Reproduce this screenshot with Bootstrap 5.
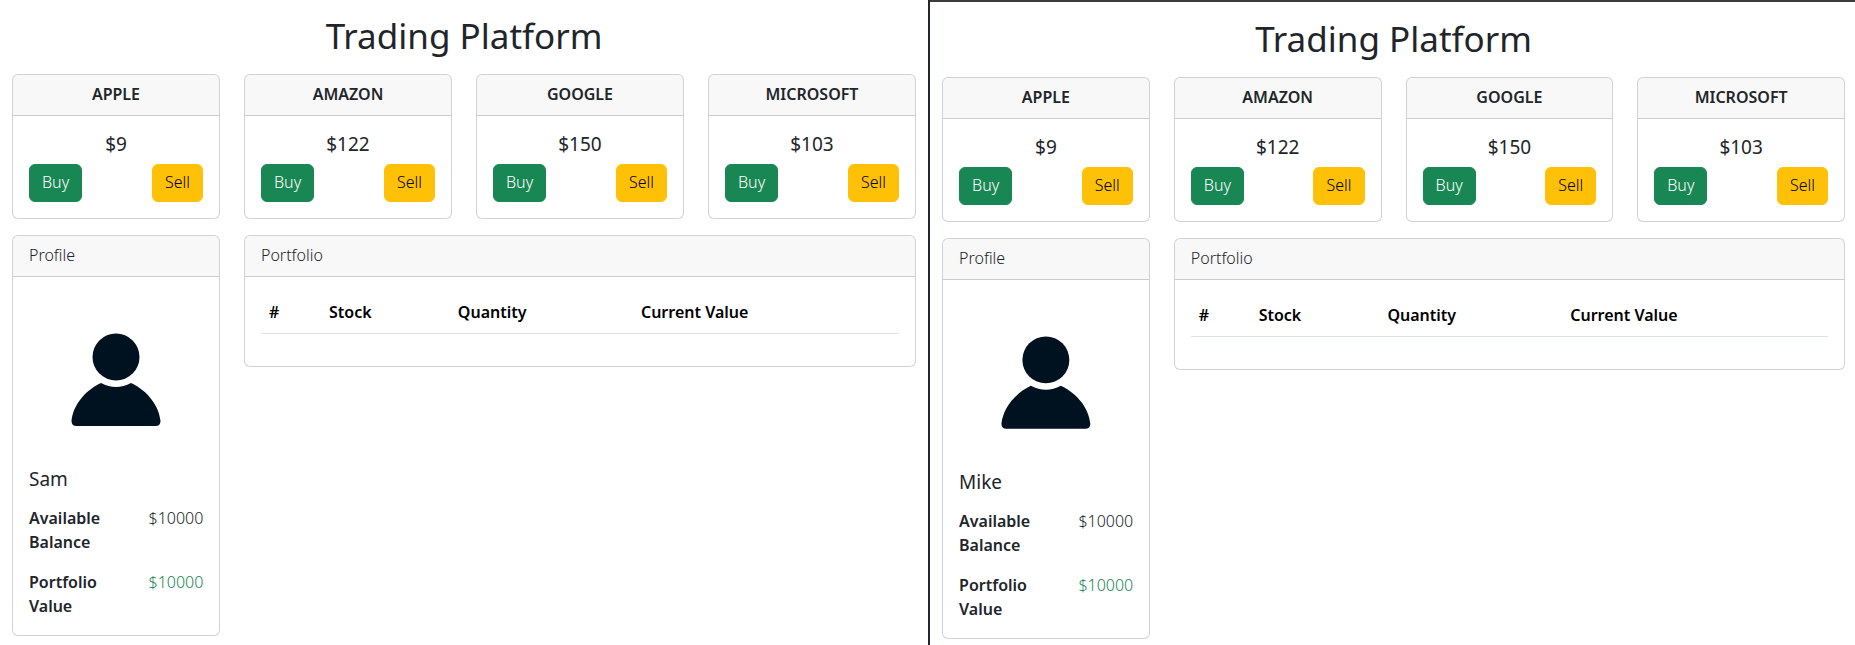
<!DOCTYPE html>
<html lang="en">
<head>
<meta charset="utf-8">
<meta name="viewport" content="width=device-width, initial-scale=1">
<title>Trading Platform</title>
<link href="https://cdn.jsdelivr.net/npm/bootstrap@5.3.0/dist/css/bootstrap.min.css" rel="stylesheet">
<style>
  body { font-family: "Noto Sans", "Open Sans", sans-serif; font-size: 16px; line-height: 24px; font-weight: 350; overflow-x: hidden; }
  .pane { flex: 1 1 0; min-width: 0; overflow: hidden; padding-top: 12px; }
  .pane-first { flex: 0 0 50.03%; }
  .pane-second { border-left: 2px solid #222529; padding-top: 0; }
  .pane-second::before { content: ""; display: block; height: 2px; margin-bottom: 13px; background: #3d3b3d; }
  .pane-second .container-fluid { padding-right: 10px; }
  h1 { font-size: 35px; line-height: 48px; margin-bottom: 14px; font-weight: 450; }
  h5 { font-size: 19px; line-height: 24px; font-weight: 450; }
  .card-header { padding: 7px 16px 9px; }
  .ticker, .balances dt, .holdings th { font-weight: 600; }
  .btn { font-size: 16px; line-height: 24px; font-weight: 350; padding: 5px 12px 7px; }
  .balances { padding: 7px 0 1px; }
  .balances dt, .balances dd { margin-bottom: 16px; }
  .balances .row:last-child > * { margin-bottom: 0; }
  .avatar { display: block; width: 100%; height: auto; }
  .holdings { table-layout: fixed; color: #000; }
  .holdings th { padding: 7px 8px 9px; }
</style>
</head>
<body>
<div class="d-flex min-vh-100">

  <section class="pane pane-first">
    <div class="container-fluid">
      <h1 class="text-center">Trading Platform</h1>
      <div class="row">
        <div class="col-3"><div class="card mb-3 text-center">
          <div class="card-header ticker">APPLE</div>
          <div class="card-body"><h5>$9</h5>
            <div class="d-flex justify-content-between"><button type="button" class="btn btn-success">Buy</button><button type="button" class="btn btn-warning">Sell</button></div></div>
        </div></div>
        <div class="col-3"><div class="card mb-3 text-center">
          <div class="card-header ticker">AMAZON</div>
          <div class="card-body"><h5>$122</h5>
            <div class="d-flex justify-content-between"><button type="button" class="btn btn-success">Buy</button><button type="button" class="btn btn-warning">Sell</button></div></div>
        </div></div>
        <div class="col-3"><div class="card mb-3 text-center">
          <div class="card-header ticker">GOOGLE</div>
          <div class="card-body"><h5>$150</h5>
            <div class="d-flex justify-content-between"><button type="button" class="btn btn-success">Buy</button><button type="button" class="btn btn-warning">Sell</button></div></div>
        </div></div>
        <div class="col-3"><div class="card mb-3 text-center">
          <div class="card-header ticker">MICROSOFT</div>
          <div class="card-body"><h5>$103</h5>
            <div class="d-flex justify-content-between"><button type="button" class="btn btn-success">Buy</button><button type="button" class="btn btn-warning">Sell</button></div></div>
        </div></div>
      </div>
      <div class="row align-items-start">
        <div class="col-3"><div class="card">
          <div class="card-header">Profile</div>
          <div class="card-body">
            <svg class="avatar" viewBox="0 0 174 174" fill="#00111f" role="img" aria-label="Profile picture">
              <circle cx="87" cy="64" r="23.5"/>
              <path d="M72 90Q87 98 102 90C119 98 130 113 131.500 128Q131.500 133 126.500 133H47.500Q42.500 133 42.500 128C44 113 55 98 72 90Z"/>
            </svg>
            <h5>Sam</h5>
            <dl class="balances mb-0">
              <div class="row"><dt class="col-7">Available Balance</dt><dd class="col-5 ps-3 pe-0">$10000</dd></div>
              <div class="row"><dt class="col-7">Portfolio Value</dt><dd class="col-5 ps-3 pe-0 text-success">$10000</dd></div>
            </dl>
          </div>
        </div></div>
        <div class="col-9"><div class="card">
          <div class="card-header">Portfolio</div>
          <div class="card-body">
            <table class="table holdings">
              <colgroup><col style="width:9.4%"><col style="width:20.2%"><col style="width:28.7%"><col></colgroup>
              <thead><tr><th scope="col">#</th><th scope="col">Stock</th><th scope="col">Quantity</th><th scope="col">Current Value</th></tr></thead>
              <tbody></tbody>
            </table>
          </div>
        </div></div>
      </div>
    </div>
  </section>

  <section class="pane pane-second">
    <div class="container-fluid">
      <h1 class="text-center">Trading Platform</h1>
      <div class="row">
        <div class="col-3"><div class="card mb-3 text-center">
          <div class="card-header ticker">APPLE</div>
          <div class="card-body"><h5>$9</h5>
            <div class="d-flex justify-content-between"><button type="button" class="btn btn-success">Buy</button><button type="button" class="btn btn-warning">Sell</button></div></div>
        </div></div>
        <div class="col-3"><div class="card mb-3 text-center">
          <div class="card-header ticker">AMAZON</div>
          <div class="card-body"><h5>$122</h5>
            <div class="d-flex justify-content-between"><button type="button" class="btn btn-success">Buy</button><button type="button" class="btn btn-warning">Sell</button></div></div>
        </div></div>
        <div class="col-3"><div class="card mb-3 text-center">
          <div class="card-header ticker">GOOGLE</div>
          <div class="card-body"><h5>$150</h5>
            <div class="d-flex justify-content-between"><button type="button" class="btn btn-success">Buy</button><button type="button" class="btn btn-warning">Sell</button></div></div>
        </div></div>
        <div class="col-3"><div class="card mb-3 text-center">
          <div class="card-header ticker">MICROSOFT</div>
          <div class="card-body"><h5>$103</h5>
            <div class="d-flex justify-content-between"><button type="button" class="btn btn-success">Buy</button><button type="button" class="btn btn-warning">Sell</button></div></div>
        </div></div>
      </div>
      <div class="row align-items-start">
        <div class="col-3"><div class="card">
          <div class="card-header">Profile</div>
          <div class="card-body">
            <svg class="avatar" viewBox="0 0 174 174" fill="#00111f" role="img" aria-label="Profile picture">
              <circle cx="87" cy="64" r="23.5"/>
              <path d="M72 90Q87 98 102 90C119 98 130 113 131.500 128Q131.500 133 126.500 133H47.500Q42.500 133 42.500 128C44 113 55 98 72 90Z"/>
            </svg>
            <h5>Mike</h5>
            <dl class="balances mb-0">
              <div class="row"><dt class="col-7">Available Balance</dt><dd class="col-5 ps-3 pe-0">$10000</dd></div>
              <div class="row"><dt class="col-7">Portfolio Value</dt><dd class="col-5 ps-3 pe-0 text-success">$10000</dd></div>
            </dl>
          </div>
        </div></div>
        <div class="col-9"><div class="card">
          <div class="card-header">Portfolio</div>
          <div class="card-body">
            <table class="table holdings">
              <colgroup><col style="width:9.4%"><col style="width:20.2%"><col style="width:28.7%"><col></colgroup>
              <thead><tr><th scope="col">#</th><th scope="col">Stock</th><th scope="col">Quantity</th><th scope="col">Current Value</th></tr></thead>
              <tbody></tbody>
            </table>
          </div>
        </div></div>
      </div>
    </div>
  </section>

</div>
<script src="https://cdn.jsdelivr.net/npm/bootstrap@5.3.0/dist/js/bootstrap.bundle.min.js"></script>
</body>
</html>
